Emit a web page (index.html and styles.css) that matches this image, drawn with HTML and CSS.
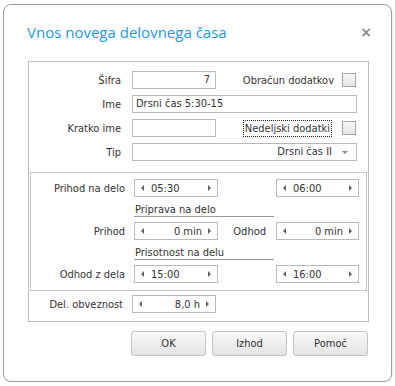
FILE: index.html
```html
<!DOCTYPE html>
<html lang="sl">
<head>
  <meta charset="UTF-8" />
  <title>Vnos novega delovnega časa</title>
  <link rel="stylesheet" href="styles.css">
</head>
<body>

  <div class="dialog">
    <div class="title-bar">
      <span class="title">Vnos novega delovnega časa</span>
      <span class="close">×</span>
    </div>

    <div class="panel">
      <div class="general">
        <div class="row">
          <label class="lbl">Šifra</label>
          <div class="field short num">7</div>
          <span class="chk-label">Obračun dodatkov</span>
          <span class="chk"></span>
        </div>
        <div class="row">
          <label class="lbl">Ime</label>
          <div class="field wide">Drsni čas 5:30-15</div>
        </div>
        <div class="row">
          <label class="lbl">Kratko ime</label>
          <div class="field short"></div>
          <span class="chk-label focus">Nedeljski dodatki</span>
          <span class="chk"></span>
        </div>
        <div class="row">
          <label class="lbl">Tip</label>
          <div class="field wide select">Drsni čas II<span class="drop"></span></div>
        </div>
      </div>

      <div class="times">
        <div class="row">
          <label class="lbl">Prihod na delo</label>
          <div class="spin"><span class="arr l"></span><span class="val">05:30</span><span class="arr r"></span></div>
          <span class="mid"></span>
          <div class="spin end"><span class="arr l"></span><span class="val">06:00</span><span class="arr r"></span></div>
        </div>
        <div class="group">Priprava na delo</div>
        <div class="row">
          <label class="lbl">Prihod</label>
          <div class="spin"><span class="arr l"></span><span class="val right">0 min</span><span class="arr r"></span></div>
          <span class="mid">Odhod</span>
          <div class="spin end"><span class="arr l"></span><span class="val right">0 min</span><span class="arr r"></span></div>
        </div>
        <div class="group">Prisotnost na delu</div>
        <div class="row">
          <label class="lbl">Odhod z dela</label>
          <div class="spin"><span class="arr l"></span><span class="val">15:00</span><span class="arr r"></span></div>
          <span class="mid"></span>
          <div class="spin end"><span class="arr l"></span><span class="val">16:00</span><span class="arr r"></span></div>
        </div>
      </div>

      <div class="duty">
        <div class="row">
          <label class="lbl">Del. obveznost</label>
          <div class="spin"><span class="arr l"></span><span class="val right">8,0 h</span><span class="arr r"></span></div>
        </div>
      </div>
    </div>

    <div class="buttons">
      <button>OK</button>
      <button>Izhod</button>
      <button>Pomoč</button>
    </div>
  </div>

</body>
</html>
```

FILE: styles.css
```css
* {
  margin: 0; padding: 0;
  box-sizing: border-box;
}

body {
  background: #fff;
  color: #333;
  font-family: "DejaVu Sans Condensed", "DejaVu Sans", sans-serif;
  font-stretch: condensed;
  font-size: 11px;
}

.dialog {
  margin: 4px 0 0 3px;
  width: 389px;
  height: 378px;
  border: 1px solid #9e9e9e;
  border-radius: 8px;
  background: #fff;
  box-shadow: 1px 1px 1px rgba(0,0,0,0.08);
}

.title-bar {
  height: 56px;
  display: flex;
  justify-content: space-between;
  align-items: flex-start;
  padding: 17px 19px 0 23px;
}

.title {
  font-family: "Open Sans", sans-serif;
  font-stretch: normal;
  font-size: 15px;
  color: #1a9be0;
}

.close {
  font-family: "DejaVu Sans", sans-serif;
  font-stretch: normal;
  font-size: 14px;
  font-weight: bold;
  color: #8c8c8c;
  margin-top: 2px;
}

.panel {
  margin-left: 24px;
  width: 341px;
  border: 1px solid #bdbdbd;
}

.row {
  display: flex;
  align-items: center;
  height: 18px;
}

.lbl {
  width: 92px;
  text-align: right;
  margin-right: 11px;
}

.general {
  padding: 9px 11px 11px 0;
  display: flex;
  flex-direction: column;
  gap: 6px;
}

.field {
  height: 18px;
  border: 1px solid #b9b9b9;
  padding: 0 3px;
  line-height: 16px;
  white-space: nowrap;
}

.field.short { width: 84px; }
.field.wide { flex: 1; }
.field.num { text-align: right; padding-right: 5px; }

.field.select {
  display: flex;
  justify-content: flex-end;
  align-items: center;
  padding-right: 8px;
}

.drop {
  margin-left: 10px;
  border-left: 3px solid transparent;
  border-right: 3px solid transparent;
  border-top: 3px solid #8a8a8a;
}

.chk-label {
  margin-left: auto;
  margin-right: 7px;
  line-height: 15px;
  padding: 0 1px;
}

.chk-label.focus {
  border: 1px dotted #222;
  margin-right: 10px;
}

.chk {
  width: 14px;
  height: 14px;
  border: 1px solid #a5a5a5;
  background: linear-gradient(#f7f7f7, #e6e6e6);
  margin-right: 1px;
}

.times {
  margin: 0 1px;
  border: 1px solid #c5c5c5;
  padding: 6px 0 7px;
}

.times .lbl { width: 94px; margin-right: 9px; }

.spin {
  width: 84px;
  height: 18px;
  border: 1px solid #b9b9b9;
  display: flex;
  align-items: center;
  padding: 0 6px;
}

.spin.end { width: 83px; }

.spin .val {
  flex: 1;
  padding-left: 7px;
}

.spin .val.right {
  text-align: right;
  padding-right: 6px;
}

.arr {
  border-top: 3px solid transparent;
  border-bottom: 3px solid transparent;
}

.arr.l { border-right: 3px solid #606060; }
.arr.r { border-left: 3px solid #606060; }

.mid {
  width: 58px;
  text-align: right;
  padding-right: 10px;
}

.group {
  margin: 7px 0 5px 103px;
  width: 140px;
  padding-left: 1px;
  line-height: 12px;
  border-bottom: 1px solid #9a9a9a;
}

.duty {
  padding: 4px 0 8px;
}

.duty .lbl { width: 94px; margin-right: 9px; }

.buttons {
  display: flex;
  justify-content: flex-end;
  gap: 6px;
  padding: 9px 23px 0 0;
}

button {
  width: 75px;
  height: 25px;
  border: 1px solid #c4c4c4;
  border-radius: 3px;
  background: linear-gradient(#f8f8f8, #e4e4e4);
  font-family: inherit;
  font-stretch: condensed;
  font-size: 11px;
  color: #333;
}
```
